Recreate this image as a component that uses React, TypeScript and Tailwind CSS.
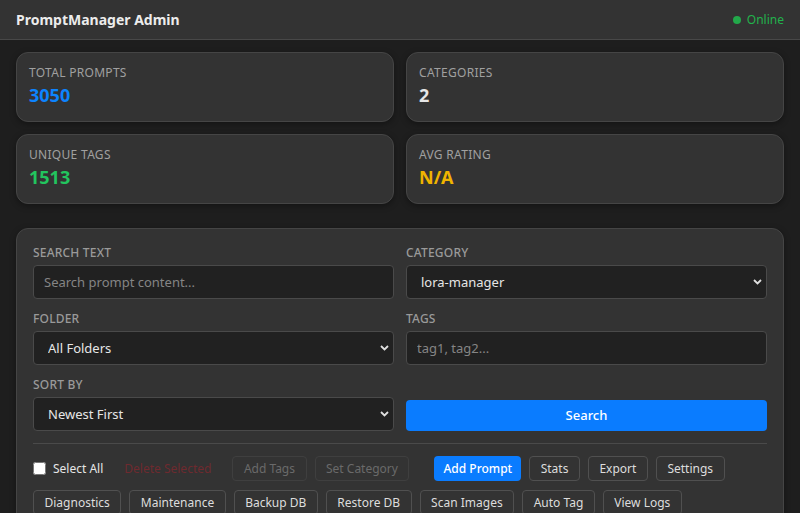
type Stat = {
  label: string;
  value: string;
  color: string;
};

const stats: Stat[] = [
  { label: "Total Prompts", value: "3050", color: "text-[#0d84ff]" },
  { label: "Categories", value: "2", color: "text-[#e6e6e6]" },
  { label: "Unique Tags", value: "1513", color: "text-[#22c55e]" },
  { label: "Avg Rating", value: "N/A", color: "text-[#f0b400]" },
];

const actionsTop = ["Stats", "Export", "Settings"];
const actionsBottom = [
  "Diagnostics",
  "Maintenance",
  "Backup DB",
  "Restore DB",
  "Scan Images",
  "Auto Tag",
  "View Logs",
];

const Chevron = () => (
  <svg
    className="pointer-events-none absolute right-[5px] top-1/2 -translate-y-1/2"
    width="9"
    height="6"
    viewBox="0 0 9 6"
    fill="none"
  >
    <path d="M1 1l3.5 3.5L8 1" stroke="#e0e0e0" strokeWidth="1.8" />
  </svg>
);

const Label = ({ text }: { text: string }) => (
  <label className="mb-1 block text-[12px] leading-4 font-medium uppercase tracking-[0.2px] text-[#9a9a9a]">
    {text}
  </label>
);

const SelectBox = ({ value }: { value: string }) => (
  <div className="relative">
    <select
      defaultValue={value}
      className="h-[34px] w-full appearance-none rounded-[4px] border border-[#4a4a4a] bg-[#212121] pl-[14px] pt-px text-[13px] text-[#e6e6e6] outline-none"
    >
      <option>{value}</option>
    </select>
    <Chevron />
  </div>
);

const TextBox = ({ placeholder }: { placeholder: string }) => (
  <input
    placeholder={placeholder}
    className="h-[34px] w-full rounded-[4px] border border-[#4a4a4a] bg-[#212121] px-[10px] text-[13px] text-[#e6e6e6] outline-none placeholder:text-[#858585]"
  />
);

const SmallButton = ({ text }: { text: string }) => (
  <button
    type="button"
    className="h-[25px] rounded-[4px] border border-[#505050] bg-[#333333] px-[10.5px] text-[12px] leading-4 text-[#dddddd]"
  >
    {text}
  </button>
);

export default function App() {
  return (
    <div className="min-h-[513px] bg-[#1e1e1e] font-['Noto_Sans',sans-serif] text-[#e6e6e6]">
      <header className="flex h-10 items-center justify-between border-b border-[#484848] bg-[#333333] px-4">
        <h1 className="text-[14px] font-bold text-[#ececec]">PromptManager Admin</h1>
        <div className="flex items-center gap-[6px] text-[12px] text-[#22b24c]">
          <span className="h-2 w-2 rounded-full bg-[#22a84a]" />
          Online
        </div>
      </header>

      <main className="px-4 pt-3">
        <div className="grid grid-cols-2 gap-3">
          {stats.map((s) => (
            <div
              key={s.label}
              className="h-[70px] rounded-xl border border-[#454545] bg-[#333333] px-3 pt-3 shadow-[0_2px_6px_rgba(0,0,0,0.35)]"
            >
              <div className="text-[12px] leading-4 uppercase tracking-[0.3px] text-[#a0a0a0]">{s.label}</div>
              <div className={`mt-0.5 text-[18px] leading-6 font-bold ${s.color}`}>{s.value}</div>
            </div>
          ))}
        </div>

        <section className="mt-6 rounded-xl border border-[#454545] bg-[#333333] p-4 shadow-[0_2px_6px_rgba(0,0,0,0.35)]">
          <div className="grid grid-cols-2 gap-x-3 gap-y-3">
            <div>
              <Label text="Search Text" />
              <TextBox placeholder="Search prompt content..." />
            </div>
            <div>
              <Label text="Category" />
              <SelectBox value="lora-manager" />
            </div>
            <div>
              <Label text="Folder" />
              <SelectBox value="All Folders" />
            </div>
            <div>
              <Label text="Tags" />
              <TextBox placeholder="tag1, tag2..." />
            </div>
            <div>
              <Label text="Sort By" />
              <SelectBox value="Newest First" />
            </div>
            <div className="flex items-end">
              <button
                type="button"
                className="h-[31px] w-full rounded-[4px] bg-[#0a7cff] text-[13px] font-medium text-white"
              >
                Search
              </button>
            </div>
          </div>

          <div className="mt-3 border-t border-[#4a4a4a] pt-3">
            <div className="flex flex-wrap items-center gap-x-2 gap-y-[9px]">
              <label className="flex items-center gap-[7px] text-[12px] text-[#e6e6e6]">
                <input type="checkbox" className="h-[13px] w-[13px]" />
                Select All
              </label>
              <button
                type="button"
                className="h-[25px] px-[13px] text-[12px] text-[#6e2a2f]"
              >
                Delete Selected
              </button>
              <button
                type="button"
                className="h-[25px] rounded-[4px] border border-[#3f3f3f] px-[10.5px] text-[12px] text-[#6a6a6a]"
              >
                Add Tags
              </button>
              <button
                type="button"
                className="h-[25px] rounded-[4px] border border-[#3f3f3f] px-[10.5px] text-[12px] text-[#6a6a6a]"
              >
                Set Category
              </button>
              <button
                type="button"
                className="ml-[17px] h-[25px] rounded-[4px] bg-[#0a7cff] px-[9px] text-[12px] font-medium text-white"
              >
                Add Prompt
              </button>
              {actionsTop.map((a) => (
                <SmallButton key={a} text={a} />
              ))}
              {actionsBottom.map((a) => (
                <SmallButton key={a} text={a} />
              ))}
            </div>
          </div>
        </section>
      </main>
    </div>
  );
}
